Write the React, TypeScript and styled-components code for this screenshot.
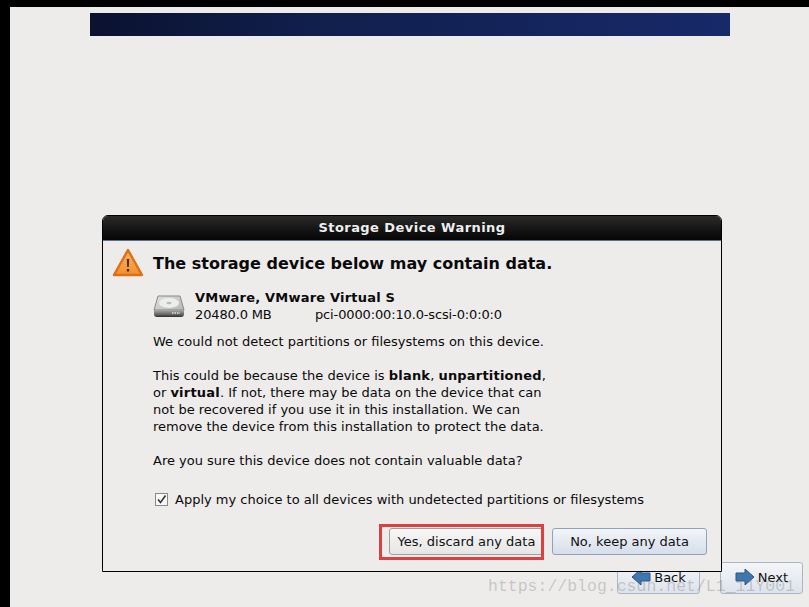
import React, { FC } from "react";
import styled, { createGlobalStyle } from "styled-components";

const GlobalStyle = createGlobalStyle`
  html, body {
    margin: 0;
    padding: 0;
    background: #000;
  }
  body {
    font-family: "DejaVu Sans", sans-serif;
    color: #0a0a0a;
  }
`;

const Screen = styled.div`
  position: relative;
  width: 809px;
  height: 607px;
  overflow: hidden;
  background: #000;
  padding: 7px 0 0 10px;
  box-sizing: border-box;
`;
const Desktop = styled.div`
  display: flex;
  flex-direction: column;
  justify-content: space-between;
  height: 100%;
  background: #edeceb;
  padding: 6px 6px 13px 80px;
  box-sizing: border-box;
`;
const Banner = styled.div`
  width: 640px;
  height: 23px;
  background: linear-gradient(90deg, #0b1230 0%, #101f4c 35%, #18296a 100%);
`;
const NavRow = styled.div`
  display: flex;
  justify-content: flex-end;
  gap: 20px;
`;
const NavButton = styled.button`
  display: flex;
  align-items: center;
  justify-content: center;
  gap: 3px;
  width: 83px;
  height: 32px;
  padding: 0 0 2px;
  border: 1px solid #a9b6c6;
  border-radius: 3px;
  background: linear-gradient(#f4f5f7, #dde3ec);
  font: 13px "DejaVu Sans", sans-serif;
  color: #111;
`;
const Dialog = styled.section`
  position: absolute;
  left: 102px;
  top: 215px;
  width: 620px;
  height: 357px;
  box-sizing: border-box;
  border: 1px solid #000;
  border-radius: 6px 6px 0 0;
  background: #edeceb;
`;
const TitleBar = styled.header`
  height: 25px;
  background: linear-gradient(#2a2a2a, #050505);
  border-radius: 5px 5px 0 0;
  border-bottom: 1px solid #5a6f8e;
  box-sizing: border-box;
  color: #eee;
  font-size: 13px;
  font-weight: 700;
  letter-spacing: 0.45px;
  line-height: 24px;
  text-align: center;
`;
const Body = styled.div`
  padding: 7px 14px 0 9px;
`;
const Headline = styled.div`
  display: flex;
  align-items: center;
  gap: 9px;
  height: 30px;
`;
const HeadlineText = styled.h1`
  margin: 0;
  font-size: 16px;
  font-weight: 700;
`;
const Content = styled.div`
  padding-left: 41px;
`;
const Device = styled.div`
  display: flex;
  align-items: center;
  gap: 10px;
  margin: 11px 0 0;
`;
const DeviceName = styled.div`
  font-size: 13px;
  font-weight: 700;
  letter-spacing: 0.2px;
  line-height: 17px;
`;
const DeviceMeta = styled.div`
  display: flex;
  font-size: 13px;
  letter-spacing: -0.14px;
  line-height: 17px;
`;
const DeviceSize = styled.span`
  width: 120px;
`;
const Paragraph = styled.p`
  margin: 0 0 17px;
  font-size: 13px;
  line-height: 17px;
`;
const Strong = styled.b`
  letter-spacing: 0.2px;
`;
const Message = styled.div`
  margin-top: 10px;
`;
const CheckRow = styled.label`
  display: flex;
  align-items: center;
  gap: 7px;
  margin: 22px 0 0 2px;
  font-size: 13px;
  line-height: 17px;
`;
const CheckBox = styled.span`
  display: flex;
  width: 11px;
  height: 11px;
  border: 1px solid #8a8a8a;
  background: #f8f8f8;
`;
const Actions = styled.div`
  display: flex;
  justify-content: flex-end;
  gap: 8px;
  margin-top: 20px;
`;
const ActionButton = styled.button<{ $primary?: boolean }>`
  position: relative;
  width: 155px;
  height: 27px;
  padding: 0;
  border-radius: 3px;
  border: 1px solid ${(p) => (p.$primary ? "#8fa3bc" : "#a0a0a0")};
  background: ${(p) =>
    p.$primary ? "linear-gradient(#f3f5f8, #d6deea)" : "linear-gradient(#f6f6f6, #e6e6e6)"};
  font: 13px "DejaVu Sans", sans-serif;
  color: #111;
`;
const Highlight = styled.span`
  position: absolute;
  left: -11px;
  top: -5px;
  right: -1px;
  bottom: -6px;
  border: 3px solid #dc4040;
`;
const Watermark = styled.div`
  position: absolute;
  left: 488px;
  top: 577px;
  font: 16.5px "Liberation Mono", monospace;
  color: rgba(120, 120, 120, 0.34);
  white-space: nowrap;
  pointer-events: none;
`;

const WarningIcon: FC = () => (
  <svg width="32" height="30" viewBox="0 0 32 30">
    <defs>
      <linearGradient id="warnFill" x1="0" y1="0" x2="0" y2="1">
        <stop offset="0" stopColor="#f9b766" />
        <stop offset="1" stopColor="#f28f2c" />
      </linearGradient>
    </defs>
    <path d="M16 2 L30 27 H2 Z" fill="url(#warnFill)" stroke="#dd6f16" strokeWidth="2.4" strokeLinejoin="round" />
    <path d="M14.8 11 h2.4 l-.4 8 h-1.6 Z M14.8 21 h2.4 v2.6 h-2.4 Z" fill="#4a2c10" />
  </svg>
);

const DiskIcon: FC = () => (
  <svg width="32" height="23" viewBox="0 0 32 23">
    <defs>
      <linearGradient id="diskTop" x1="0" y1="0" x2="1" y2="1">
        <stop offset="0" stopColor="#e0e2df" />
        <stop offset="1" stopColor="#b4b8b4" />
      </linearGradient>
      <linearGradient id="diskFront" x1="0" y1="0" x2="0" y2="1">
        <stop offset="0" stopColor="#a8a8a8" />
        <stop offset="0.6" stopColor="#6a6a6a" />
        <stop offset="1" stopColor="#2c2c2c" />
      </linearGradient>
    </defs>
    <path d="M5 1 H27 L31 15 H1 Z" fill="url(#diskTop)" stroke="#888" />
    <ellipse cx="16" cy="8" rx="10" ry="5" fill="#eceeeb" />
    <ellipse cx="16" cy="8" rx="2.5" ry="1.3" fill="#b9bdb9" />
    <path d="M1 15 H31 V19 Q31 22 28 22 H4 Q1 22 1 19 Z" fill="url(#diskFront)" />
    <path d="M19 18 h8" stroke="#e4e4e4" strokeWidth="1.5" strokeDasharray="1.5 1" />
  </svg>
);

const Arrow: FC<{ flip?: boolean }> = ({ flip }) => (
  <svg width="20" height="18" viewBox="0 0 20 18" style={flip ? { transform: "scaleX(-1)" } : undefined}>
    <path d="M1 5 H10 V1 L19 9 L10 17 V13 H1 Z" fill="#3f76ad" stroke="#2a5688" />
  </svg>
);

const App: FC = () => (
  <Screen>
    <GlobalStyle />
    <Desktop>
      <Banner />
      <NavRow>
        <NavButton><Arrow flip />Back</NavButton>
        <NavButton><Arrow />Next</NavButton>
      </NavRow>
    </Desktop>
    <Dialog>
      <TitleBar>Storage Device Warning</TitleBar>
      <Body>
        <Headline>
          <WarningIcon />
          <HeadlineText>The storage device below may contain data.</HeadlineText>
        </Headline>
        <Content>
          <Device>
            <DiskIcon />
            <div>
              <DeviceName>VMware, VMware Virtual S</DeviceName>
              <DeviceMeta>
                <DeviceSize>20480.0 MB</DeviceSize>
                <span>pci-0000:00:10.0-scsi-0:0:0:0</span>
              </DeviceMeta>
            </div>
          </Device>
          <Message>
            <Paragraph>We could not detect partitions or filesystems on this device.</Paragraph>
            <Paragraph>
              This could be because the device is <Strong>blank</Strong>, <Strong>unpartitioned</Strong>,<br />
              or <Strong>virtual</Strong>. If not, there may be data on the device that can<br />
              not be recovered if you use it in this installation. We can<br />
              remove the device from this installation to protect the data.
            </Paragraph>
            <Paragraph>Are you sure this device does not contain valuable data?</Paragraph>
          </Message>
          <CheckRow>
            <CheckBox>
              <svg width="11" height="11" viewBox="0 0 11 11">
                <path d="M2 5.5 L4.5 8.5 L9.5 1.5" fill="none" stroke="#333" strokeWidth="1.6" />
              </svg>
            </CheckBox>
            Apply my choice to all devices with undetected partitions or filesystems
          </CheckRow>
        </Content>
        <Actions>
          <ActionButton>
            Yes, discard any data
            <Highlight />
          </ActionButton>
          <ActionButton $primary>No, keep any data</ActionButton>
        </Actions>
      </Body>
    </Dialog>
    <Watermark>https://blog.csdn.net/L1_11Y001</Watermark>
  </Screen>
);

export default App;
